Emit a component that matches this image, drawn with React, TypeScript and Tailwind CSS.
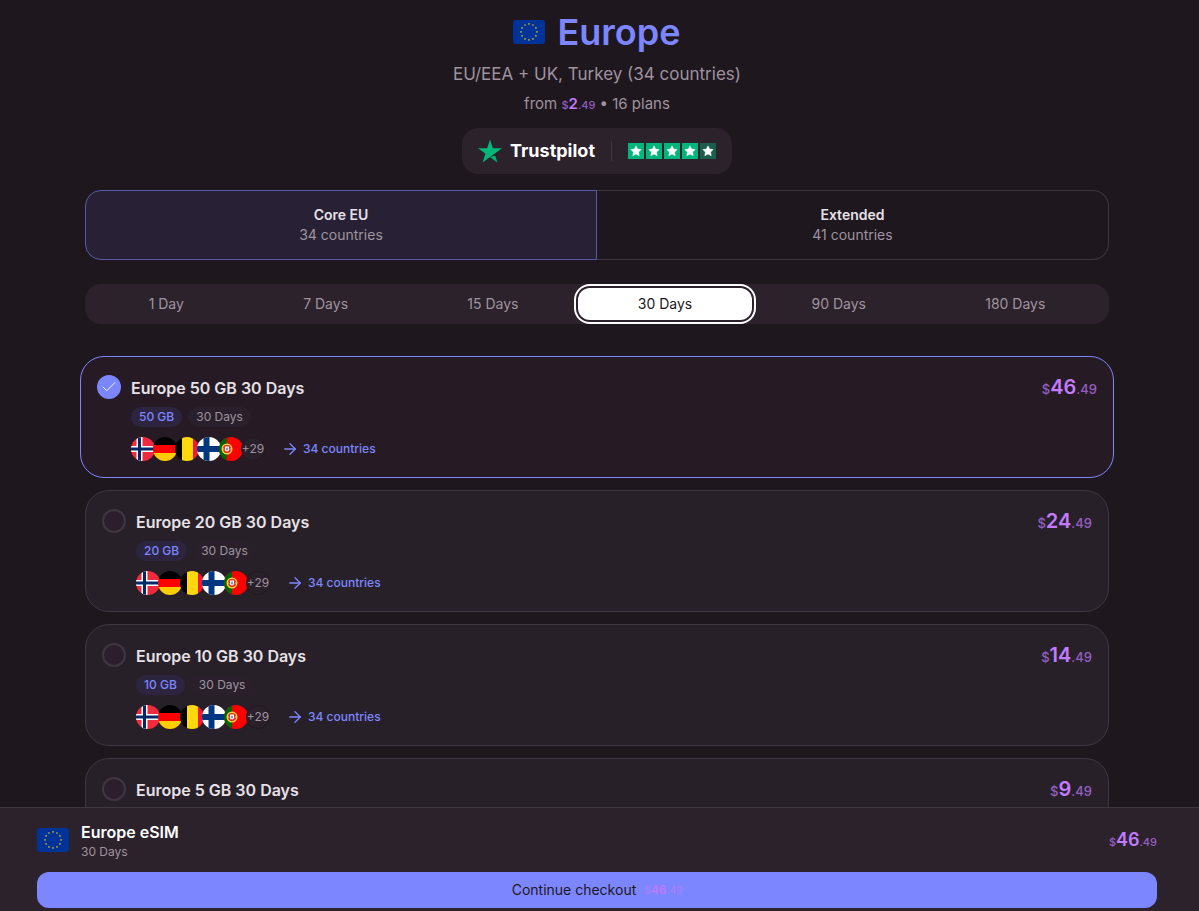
import React, { useState } from 'react';
import { ArrowRight, Check } from 'lucide-react';
import { SiTrustpilot } from 'react-icons/si';

const regions = [
  { id: 'core', name: 'Core EU', countries: 34 },
  { id: 'extended', name: 'Extended', countries: 41 },
];

const durations = ['1 Day', '7 Days', '15 Days', '30 Days', '90 Days', '180 Days'];

const plans = [
  { gb: 50, price: '46.49' },
  { gb: 20, price: '24.49' },
  { gb: 10, price: '14.49' },
  { gb: 5, price: '9.49' },
];

const EuFlag: React.FC = () => (
  <svg viewBox="0 0 32 24" className="h-6 w-8 shrink-0 rounded-[3px]" aria-hidden="true">
    <rect width="32" height="24" fill="#039" />
    {Array.from({ length: 12 }, (_, i) => {
      const a = (i * Math.PI) / 6;
      return (
        <path
          key={i}
          d="M0-1.2.3-.4 1.1-.4.5.2.7 1 0 .5-.7 1-.5.2-1.1-.4-.3-.4Z"
          fill="#fc0"
          transform={`translate(${16 + 8 * Math.sin(a)} ${12 - 8 * Math.cos(a)})`}
        />
      );
    })}
  </svg>
);

const flags = [
  <>
    <rect width="24" height="24" fill="#ef2b3d" />
    <path d="M8.500 0v24M0 12h24" stroke="#fff" strokeWidth="6" />
    <path d="M8.500 0v24M0 12h24" stroke="#002868" strokeWidth="3" />
  </>,
  <>
    <rect width="24" height="8" fill="#000" />
    <rect y="8" width="24" height="8" fill="#f00" />
    <rect y="16" width="24" height="8" fill="#fc0" />
  </>,
  <>
    <rect width="7" height="24" fill="#000" />
    <rect x="7" width="11" height="24" fill="#ffd90c" />
    <rect x="18" width="6" height="24" fill="#f31830" />
  </>,
  <>
    <rect width="24" height="24" fill="#fff" />
    <path d="M9.500 0v24M0 12h24" stroke="#003580" strokeWidth="6" />
  </>,
  <>
    <rect width="24" height="24" fill="#f00" />
    <rect width="8" height="24" fill="#060" />
    <circle cx="8" cy="12" r="4.800" fill="#d9362b" stroke="#f5d63c" strokeWidth="1.400" />
    <path d="M3.200 12h9.600" stroke="#f5d63c" strokeWidth="1" />
    <path d="M5.500 9h5v3.500a2.500 2.500 0 0 1-5 0z" fill="#fff" stroke="#e11" strokeWidth=".8" />
    <path d="M8 10.500v3M6.800 12h2.400" stroke="#4a6bb5" strokeWidth=".9" />
  </>,
];

const CountryFlags: React.FC = () => (
  <div className="flex">
    {flags.map((flag, i) => (
      <svg key={i} viewBox="0 0 24 24" className="-mr-0.5 size-6 rounded-full" aria-hidden="true">
        {flag}
      </svg>
    ))}
    <span className="flex size-6 items-center justify-center rounded-full border border-[#221921] bg-[#2a202a] text-xs text-[#9f939f]">+29</span>
  </div>
);

const Price: React.FC<{ value: string; className: string; smallClassName: string }> = ({ value, className, smallClassName }) => {
  const [whole, cents] = value.split('.');
  return (
    <span className={`whitespace-nowrap font-semibold text-[#c27aff] ${className}`}>
      <span className={`font-medium opacity-70 ${smallClassName}`}>$</span>
      {whole}
      <span className={`font-medium opacity-70 ${smallClassName}`}>.{cents}</span>
    </span>
  );
};

const Trustpilot: React.FC = () => (
  <a href="#reviews" className="mt-3 flex h-[46px] items-center rounded-2xl bg-[#2c222c] px-4">
    <SiTrustpilot className="size-6 text-[#00b67a]" />
    <span className="ml-2 text-lg font-bold text-white">Trustpilot</span>
    <span className="mx-4 h-5 w-px bg-[#403641]" />
    <span className="flex gap-0.5">
      {[1, 2, 3, 4, 5].map((n) => (
        <svg key={n} viewBox="0 0 16 16" className="size-4" aria-hidden="true">
          <rect width="16" height="16" fill={n < 5 ? '#00b67a' : '#1c5e4b'} />
          <path d="M8 2.800 9.600 6.100l3.600.5-2.600 2.500.6 3.600L8 11l-3.200 1.700.6-3.600L2.800 6.600l3.600-.5z" fill="#fff" stroke="#fff" strokeWidth=".5" strokeLinejoin="round" />
        </svg>
      ))}
    </span>
  </a>
);

const App: React.FC = () => {
  const [region, setRegion] = useState('core');
  const [duration, setDuration] = useState('30 Days');
  const [selected, setSelected] = useState(50);
  const total = plans.find((p) => p.gb === selected)?.price ?? '0.00';

  return (
    <div className="flex h-screen flex-col bg-[#1e171e] font-['Inter',sans-serif] text-[#e6e1e6]">
      <main className="min-h-0 flex-1 overflow-y-auto pr-[5px] [scrollbar-width:none]">
        <div className="mx-auto flex max-w-5xl flex-col pt-3 pb-6">
          <header className="flex flex-col items-center text-[#9f939f]">
            <h1 className="flex items-center gap-3 text-4xl leading-10 font-semibold text-[#7c86ff]">
              <EuFlag />
              Europe
            </h1>
            <p className="mt-2 text-[17px] leading-7">EU/EEA + UK, Turkey (34 countries)</p>
            <p className="mt-1 text-[15px] leading-6">
              from <Price value="2.49" className="leading-none" smallClassName="text-[11px]" /> • 16 plans
            </p>
            <Trustpilot />
          </header>

          <div className="mt-4 grid grid-cols-2">
            {regions.map((r) => (
              <button
                key={r.id}
                type="button"
                onClick={() => setRegion(r.id)}
                className={`flex h-[70px] flex-col items-center justify-center border text-sm first:rounded-l-2xl last:rounded-r-2xl last:border-l-0 ${
                  region === r.id ? 'border-[#5459a8] bg-[#282135]' : 'border-[#403641]'
                }`}
              >
                <span className="font-semibold">{r.name}</span>
                <span className="text-[#9f939f]">{r.countries} countries</span>
              </button>
            ))}
          </div>

          <div className="mt-6 flex h-10 rounded-2xl bg-[#2c222c] p-1">
            {durations.map((d) => (
              <button
                key={d}
                type="button"
                onClick={() => setDuration(d)}
                className={`flex-auto rounded-xl text-sm ${
                  duration === d ? 'bg-white text-[#1e171e] ring-2 ring-white ring-offset-2 ring-offset-[#2c222c]' : 'text-[#9f939f]'
                }`}
              >
                {d}
              </button>
            ))}
          </div>

          <div className="mt-8 flex flex-col gap-3">
            {plans.map(({ gb, price }) => {
              const active = gb === selected;
              return (
                <div
                  key={gb}
                  className={`flex items-start rounded-3xl border p-4 ${active ? '-mx-[5px] border-[#7c86ff] bg-[#261b24]' : 'border-[#403641] bg-[#272029]'}`}
                >
                  <span className="relative mt-0.5 size-6 shrink-0">
                    <input
                      id={`plan-${gb}`}
                      type="radio"
                      name="plan"
                      checked={active}
                      onChange={() => setSelected(gb)}
                      className="block size-6 appearance-none rounded-full border-2 border-[#403641] bg-[#2a1f2b] checked:border-[#7c86ff] checked:bg-[#7c86ff]"
                    />
                    {active && <Check className="pointer-events-none absolute inset-[3px] size-[18px] text-white" strokeWidth={1.25} />}
                  </span>
                  <div className="ml-2.5 flex-1">
                    <label htmlFor={`plan-${gb}`} className="block text-base leading-[30px] font-semibold">
                      Europe {gb} GB 30 Days
                    </label>
                    <div className="mt-1 flex gap-1.5 text-xs">
                      <span className="flex h-5 items-center rounded-full bg-[#2d2540] px-2 font-medium text-[#7c86ff]">{gb} GB</span>
                      <span className="flex h-5 items-center rounded-full bg-[#2a202b] px-2 text-[#9f939f]">30 Days</span>
                    </div>
                    <div className="mt-2.5 flex items-center gap-4">
                      <CountryFlags />
                      <button type="button" className="flex items-center gap-1 text-xs font-medium text-[#7c86ff]">
                        <ArrowRight className="size-[18px]" strokeWidth={1.75} />
                        34 countries
                      </button>
                    </div>
                  </div>
                  <Price value={price} className="text-xl leading-7" smallClassName="text-[13px]" />
                </div>
              );
            })}
          </div>
        </div>
      </main>

      <footer className="border-t border-[#403641] bg-[#2c222c] pr-[5px]">
        <div className="mx-auto max-w-[1120px] pt-3 pb-[3px]">
          <div className="flex items-center gap-3">
            <EuFlag />
            <div className="flex-1">
              <p className="text-base leading-6 font-semibold text-white">Europe eSIM</p>
              <p className="text-xs text-[#9f939f]">{duration}</p>
            </div>
            <Price value={total} className="text-lg" smallClassName="text-[11px]" />
          </div>
          <button type="button" className="mt-3 flex h-9 w-full items-center justify-center gap-2 rounded-xl bg-[#7c86ff] text-sm text-[#1e171e]">
            Continue checkout
            <Price value={total} className="text-xs" smallClassName="text-[10px]" />
          </button>
        </div>
      </footer>
    </div>
  );
};

export default App;
